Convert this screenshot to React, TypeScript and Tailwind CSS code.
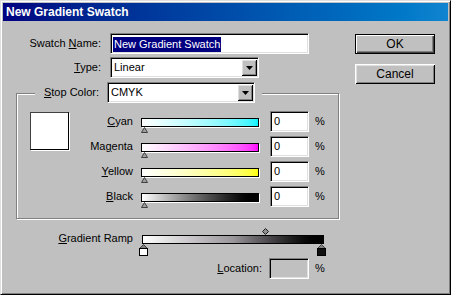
import type { ReactNode } from "react";

const sunken =
	"border border-t-[#808080] border-l-[#808080] border-b-white border-r-white shadow-[inset_1px_1px_0_#000,inset_-1px_-1px_0_#dfdfdf]";
const raised =
	"shadow-[inset_1px_1px_0_#fff,inset_-1px_-1px_0_#000,inset_2px_2px_0_#dfdfdf,inset_-2px_-2px_0_#808080]";

function Dropdown({ value, width }: { value: string; width: string }) {
	return (
		<div className={`${sunken} ${width} h-[21px] bg-white flex items-center pl-[3px] py-[1px] pr-[1px]`}>
			<span className="flex-1">{value}</span>
			<div className={`${raised} bg-[#c0c0c0] w-[16px] h-[17px] flex items-center justify-center`}>
				<svg width="7" height="4" viewBox="0 0 7 4">
					<polygon points="0,0 7,0 3.5,4" fill="#000" />
				</svg>
			</div>
		</div>
	);
}

function Marker() {
	return (
		<svg width="8" height="6" viewBox="0 0 8 6" className="block">
			<polygon points="0.5,5.5 3.5,0.5 6.5,5.5" fill="#a0a0a0" stroke="#404040" strokeWidth="1" />
		</svg>
	);
}

function Stop({ fill }: { fill: string }) {
	return (
		<svg width="9" height="12" viewBox="0 0 9 12" className="block">
			<polygon points="0.5,4.5 4.5,0.5 8.5,4.5" fill="#808080" stroke="#404040" strokeWidth="1" />
			<rect x="0.5" y="4.5" width="8" height="7" fill={fill} stroke="#000" strokeWidth="1" />
		</svg>
	);
}

function Key({ pre = "", u, post = "" }: { pre?: string; u: string; post?: string }) {
	return (
		<span>
			{pre}
			<span className="underline underline-offset-[1px]">{u}</span>
			{post}
		</span>
	);
}

function InkRow({ label, bar }: { label: ReactNode; bar: string }) {
	return (
		<div className="flex h-[21px]">
			<div className="w-[64px] text-right leading-[21px]">{label}</div>
			<div className="ml-[8px] w-[118px] pt-[7px]">
				<div className={`h-[9px] border border-black shadow-[1px_1px_0_#fff] ${bar}`} />
				<Marker />
			</div>
			<div className={`${sunken} ml-[11px] w-[39px] h-[21px] bg-white pl-[3px] leading-[18px]`}>0</div>
			<span className="ml-[6px] leading-[21px]">%</span>
		</div>
	);
}

export default function App() {
	return (
		<div className="w-[451px] h-[295px] bg-[#c0c0c0] border border-t-[#dfdfdf] border-l-[#dfdfdf] border-r-black border-b-black shadow-[inset_1px_1px_0_#fff,inset_-1px_-1px_0_#808080] p-[1px] text-[11px] text-black font-['Liberation_Sans',Arial,sans-serif] overflow-hidden">
			<div className="mx-[1px] mt-[1px] h-[18px] bg-gradient-to-r from-[#000080] to-[#1084d0] px-[3px] flex items-center">
				<span className="text-white font-bold text-[12px]">New Gradient Swatch</span>
			</div>

			<div className="flex pt-[12px]">
				{/* left side */}
				<div className="w-[353px] flex-none flex flex-col">
					<div className="flex items-center">
						<div className="w-[99px] text-right"><Key pre="Swatch " u="N" post="ame:" /></div>
						<div className={`${sunken} ml-[9px] w-[199px] h-[21px] bg-white pl-[2px] pt-[2px]`}>
							<span className="bg-[#000080] text-white px-[1px] leading-[15px] inline-block">New Gradient Swatch</span>
						</div>
					</div>
					<div className="flex items-center mt-[3px]">
						<div className="w-[99px] text-right"><Key u="T" post="ype:" /></div>
						<div className="ml-[9px]"><Dropdown value="Linear" width="w-[149px]" /></div>
					</div>

					<div className="mt-[15px] ml-[14px] w-[323px] h-[126px] border border-[#808080] shadow-[1px_1px_0_#fff,inset_1px_1px_0_#fff] flex flex-col">
						<div className="-mt-[12px] ml-[18px] w-fit flex items-center bg-[#c0c0c0] pr-[7px]">
							<div className="w-[64px] text-right"><Key u="S" post="top Color:" /></div>
							<div className="ml-[8px]"><Dropdown value="CMYK" width="w-[148px]" /></div>
						</div>
						<div className="flex mt-[8px]">
							<div className="ml-[13px] mt-[1px] w-[39px] h-[38px] bg-white border border-t-[#404040] border-l-[#404040] border-b-black border-r-black shadow-[1px_1px_0_#fff]" />
							<div className="flex flex-col gap-[4px]">
								<InkRow label={<Key u="C" post="yan" />} bar="bg-gradient-to-r from-white to-[#00f4ff]" />
								<InkRow label={<Key pre="Ma" u="g" post="enta" />} bar="bg-gradient-to-r from-white to-[#ff00ff]" />
								<InkRow label={<Key u="Y" post="ellow" />} bar="bg-gradient-to-r from-white to-[#ffff00]" />
								<InkRow label={<Key u="B" post="lack" />} bar="bg-gradient-to-r from-white to-black" />
							</div>
						</div>
					</div>

					<div className="flex mt-[9px]">
						<div className="w-[131px] text-right mt-[3px] leading-[14px]"><Key u="G" post="radient Ramp" /></div>
						<div className="ml-[9px] w-[182px] flex flex-col">
							<div className="h-[7px] relative">
								<svg width="7" height="7" viewBox="0 0 7 7" className="absolute left-[120px] top-0">
									<polygon points="3.5,0.5 6.5,3.5 3.5,6.5 0.5,3.5" fill="#909090" stroke="#202020" strokeWidth="1" />
								</svg>
							</div>
							<div className="h-[9px] border border-black bg-gradient-to-r from-white via-[#9a969a] to-black" />
							<div className="flex justify-between -ml-[3px] -mr-[2px]">
								<Stop fill="#fff" />
								<Stop fill="#101010" />
							</div>
						</div>
					</div>

					<div className="flex items-center mt-[2px]">
						<div className="w-[260px] text-right"><Key u="L" post="ocation:" /></div>
						<div className={`${sunken} ml-[7px] w-[40px] h-[21px] bg-[#c0c0c0]`} />
						<span className="ml-[6px]">%</span>
					</div>
				</div>

				{/* buttons */}
				<div className="flex flex-col">
					<button className="mt-[1px] w-[80px] h-[20px] border border-black bg-[#c0c0c0] shadow-[inset_1px_1px_0_#fff,inset_-1px_-1px_0_#404040,inset_-2px_-2px_0_#808080] text-[12px]">
						OK
					</button>
					<button className={`mt-[10px] w-[80px] h-[20px] bg-[#c0c0c0] ${raised} text-[12px]`}>
						Cancel
					</button>
				</div>
			</div>
		</div>
	);
}
